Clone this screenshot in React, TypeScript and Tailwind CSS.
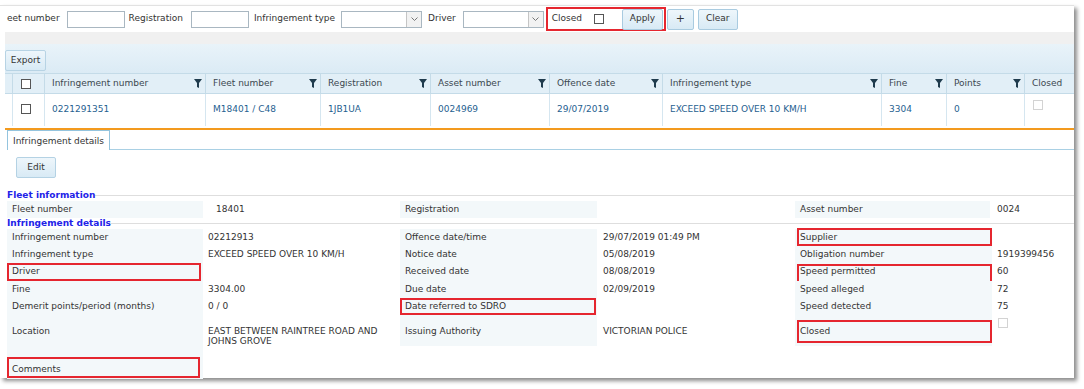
import React from 'react'

const Funnel = () => (
  <svg width="8" height="9" viewBox="0 0 8 9" className="shrink-0">
    <path d="M0 0H8L5 4V9L3 8V4Z" fill="#1f3b4d" />
  </svg>
)

const Box = ({ className = '' }: { className?: string }) => (
  <span className={`pointer-events-none absolute border-2 border-[#e5262f] ${className}`} />
)

const Check = ({ disabled = false }: { disabled?: boolean }) => (
  <span
    className={`inline-block h-[10px] w-[10px] bg-white border ${disabled ? 'border-[#d3d3d3]' : 'border-[#555]'}`}
  />
)

const Select = () => (
  <div className="flex h-[17px] w-[81px] border border-[#a9b7c1] bg-white">
    <div className="flex-1" />
    <div className="flex w-[15px] items-center justify-center border-l border-[#c5c5c5] bg-[#f2f2f2]">
      <svg width="7" height="5" viewBox="0 0 7 5">
        <polyline points="0.5,0.5 3.5,3.5 6.5,0.5" fill="none" stroke="#777" strokeWidth="1" />
      </svg>
    </div>
  </div>
)

const Btn = ({ children, className = '' }: { children: React.ReactNode; className?: string }) => (
  <div
    className={`flex h-[21px] items-center justify-center rounded-[2px] border border-[#a9cbe0] bg-gradient-to-b from-[#eef6fb] to-[#d8eaf5] text-[#333] ${className}`}
  >
    {children}
  </div>
)

const cols = [
  { w: 'w-[8px]', label: '' },
  { w: 'w-[32px]', label: 'check' },
  { w: 'w-[161px]', label: 'Infringement number', value: '0221291351' },
  { w: 'w-[115px]', label: 'Fleet number', value: 'M18401 / C48' },
  { w: 'w-[110px]', label: 'Registration', value: '1JB1UA' },
  { w: 'w-[119px]', label: 'Asset number', value: '0024969' },
  { w: 'w-[113px]', label: 'Offence date', value: '29/07/2019' },
  { w: 'w-[219px]', label: 'Infringement type', value: 'EXCEED SPEED OVER 10 KM/H' },
  { w: 'w-[65px]', label: 'Fine', value: '3304' },
  { w: 'w-[78px]', label: 'Points', value: '0' },
  { w: 'w-[49px]', label: 'Closed', value: 'closed' },
]

type Cell = { label: string; value?: React.ReactNode; box?: string }
type Row = { h: string; tall?: boolean; cells: Cell[] }

const rows: Row[] = [
  {
    h: 'h-[17px]',
    cells: [
      { label: 'Infringement number', value: '02212913' },
      { label: 'Offence date/time', value: '29/07/2019 01:49 PM' },
      { label: 'Supplier', box: 'left-[2px] right-0 -top-[1px] bottom-0' },
    ],
  },
  {
    h: 'h-[17px]',
    cells: [
      { label: 'Infringement type', value: 'EXCEED SPEED OVER 10 KM/H' },
      { label: 'Notice date', value: '05/08/2019' },
      { label: 'Obligation number', value: '1919399456' },
    ],
  },
  {
    h: 'h-[18px]',
    cells: [
      { label: 'Driver', box: 'left-0 right-[2px] top-0 bottom-0' },
      { label: 'Received date', value: '08/08/2019' },
      { label: 'Speed permitted', value: '60', box: 'left-[2px] right-0 top-[1px] -bottom-[34px]' },
    ],
  },
  {
    h: 'h-[17px]',
    cells: [
      { label: 'Fine', value: '3304.00' },
      { label: 'Due date', value: '02/09/2019' },
      { label: 'Speed alleged', value: '72' },
    ],
  },
  {
    h: 'h-[17px]',
    cells: [
      { label: 'Demerit points/period (months)', value: '0 / 0' },
      { label: 'Date referred to SDRO', box: 'left-0 right-[1px] top-0 bottom-0' },
      { label: 'Speed detected', value: '75' },
    ],
  },
  {
    h: 'h-[31px]',
    tall: true,
    cells: [
      { label: 'Location', value: 'EAST BETWEEN RAINTREE ROAD AND JOHNS GROVE' },
      { label: 'Issuing Authority', value: 'VICTORIAN POLICE' },
      { label: 'Closed', value: 'check', box: 'left-[2px] right-0 top-[5px] bottom-[3px]' },
    ],
  },
]

export default function App() {
  return (
    <div className="h-[389px] w-[1084px] overflow-hidden bg-white pt-[5px] font-['DejaVu_Sans',Verdana,sans-serif] text-[9px] text-[#333]">
      <div className="h-[373px] w-[1074px] border-t border-[#e2e2e2] bg-white shadow-[3px_3px_4px_rgba(0,0,0,0.45)]">
        {/* filter bar */}
        <div className="flex h-[26px] items-center pl-[7px]">
          <span>eet number</span>
          <div className="ml-[7px] h-[17px] w-[58px] border border-[#a9b7c1] bg-white" />
          <span className="ml-[4px]">Registration</span>
          <div className="ml-[8px] h-[17px] w-[58px] border border-[#a9b7c1] bg-white" />
          <span className="ml-[5px]">Infringement type</span>
          <div className="ml-[6px]">
            <Select />
          </div>
          <span className="ml-[6px]">Driver</span>
          <div className="ml-[7px]">
            <Select />
          </div>
          <div className="ml-[2px] flex h-[24px] w-[120px] shrink-0 items-center border-2 border-[#e5262f] pl-[4px]">
            <span>Closed</span>
            <span className="ml-[12px] flex">
              <Check />
            </span>
            <Btn className="ml-[18px] w-[41px]">Apply</Btn>
          </div>
          <Btn className="ml-[1px] w-[27px] text-[11px]">+</Btn>
          <Btn className="ml-[4px] w-[40px]">Clear</Btn>
        </div>

        <div className="ml-[5px]">
          {/* gray band */}
          <div className="h-[12px] bg-[#f0f0f0]" />
          {/* toolbar */}
          <div className="flex h-[29px] items-end bg-gradient-to-b from-[#e9f3f9] to-[#dbebf5] pb-[2px]">
            <Btn className="w-[41px] border-[#b7d3e4]">Export</Btn>
          </div>
          {/* grid header */}
          <div className="flex h-[21px] border-y border-[#c4dbe8] bg-[#e2eff7] text-[#3b4750]">
            {cols.map((c, i) => (
              <div
                key={i}
                className={`${c.w} flex shrink-0 items-center border-r border-[#c4dbe8] last:border-r-0 ${c.label ? 'pl-[7px] pr-[3px]' : ''}`}
              >
                {c.label === 'check' ? (
                  <span className="ml-[1px] flex">
                    <Check />
                  </span>
                ) : c.label ? (
                  <>
                    <span className="flex-1 whitespace-nowrap">{c.label}</span>
                    {c.label !== 'Closed' && <Funnel />}
                  </>
                ) : null}
              </div>
            ))}
          </div>
          {/* data row */}
          <div className="flex h-[32px] text-[#1f6190]">
            {cols.map((c, i) => (
              <div
                key={i}
                className={`${c.w} flex shrink-0 items-center border-r border-[#d5e6f0] last:border-r-0 ${c.label ? 'pl-[7px]' : ''}`}
              >
                {c.label === 'check' ? (
                  <span className="-mt-[2px] ml-[1px] flex">
                    <Check />
                  </span>
                ) : c.value === 'closed' ? (
                  <span className="-mt-[10px] ml-[1px] flex">
                    <Check disabled />
                  </span>
                ) : (
                  <span className="whitespace-nowrap">{c.value}</span>
                )}
              </div>
            ))}
          </div>
          {/* orange separator */}
          <div className="mt-[2px] h-[2px] bg-[#f39a1e]" />
        </div>

        {/* tabs */}
        <div className="flex h-[20px] items-end">
          <div className="ml-[7px] flex h-[20px] w-[103px] items-center border-x border-t border-[#94c4de] bg-white pl-[5px] pt-[2px]">
            Infringement details
          </div>
          <div className="h-px flex-1 bg-[#a9d0e4]" />
        </div>

        <div className="pl-[16px] pt-[7px]">
          <Btn className="w-[40px] border-[#b4d2e4]">Edit</Btn>
        </div>

        {/* fleet information */}
        <div className="mt-[11px] flex h-[12px] items-center pl-[7px]">
          <span className="translate-y-[1px] text-[9px] font-bold text-[#2222e8]">Fleet information</span>
          <div className="h-px flex-1 bg-[#dedede]" />
        </div>
        <div className="grid h-[17px] grid-cols-[196px_197px_197px_198px_195px_84px] pl-[7px]">
          <div className="flex items-center bg-[#f3f8fa] pl-[5px]">Fleet number</div>
          <div className="flex items-center pl-[13px]">18401</div>
          <div className="flex items-center bg-[#f3f8fa] pl-[5px]">Registration</div>
          <div />
          <div className="flex items-center bg-[#f3f8fa] pl-[5px]">Asset number</div>
          <div className="flex items-center pl-[7px]">0024</div>
        </div>

        {/* infringement details */}
        <div className="-mt-[1px] flex h-[12px] items-center pl-[7px]">
          <span className="translate-y-[1px] text-[9px] font-bold text-[#2222e8]">Infringement details</span>
          <div className="h-px flex-1 bg-[#dedede]" />
        </div>
        <div>
          {rows.map((r, ri) => (
            <div key={ri} className={`grid ${r.h} grid-cols-[196px_197px_197px_198px_197px_82px] pl-[7px]`}>
              {r.cells.map((c, ci) => (
                <React.Fragment key={ci}>
                  <div
                    className={`relative flex bg-[#f3f8fa] pl-[5px] ${r.tall ? 'items-start pt-[11px] leading-[10px]' : 'items-center'}`}
                  >
                    <span>{c.label}</span>
                    {c.box && <Box className={c.box} />}
                  </div>
                  <div
                    className={`flex ${ci === 1 ? 'pl-[6px]' : 'pl-[5px]'} ${r.tall ? (c.value === 'check' ? 'items-start pt-[3px]' : 'items-start pt-[11px] leading-[10px]') : 'items-center'}`}
                  >
                    {c.value === 'check' ? (
                      <span className="ml-[1px] flex">
                        <Check disabled />
                      </span>
                    ) : (
                      <span className={r.tall && ci === 0 ? 'max-w-[180px]' : ''}>{c.value}</span>
                    )}
                  </div>
                </React.Fragment>
              ))}
            </div>
          ))}
        </div>
        <div className="grid h-[33px] grid-cols-[196px_1fr] pl-[7px]">
          <div className="relative flex items-end bg-[#f3f8fa] pb-[3px] pl-[5px]">
            Comments
            <Box className="left-0 right-[3px] top-[11px] bottom-[1px]" />
          </div>
          <div />
        </div>
      </div>
    </div>
  )
}
